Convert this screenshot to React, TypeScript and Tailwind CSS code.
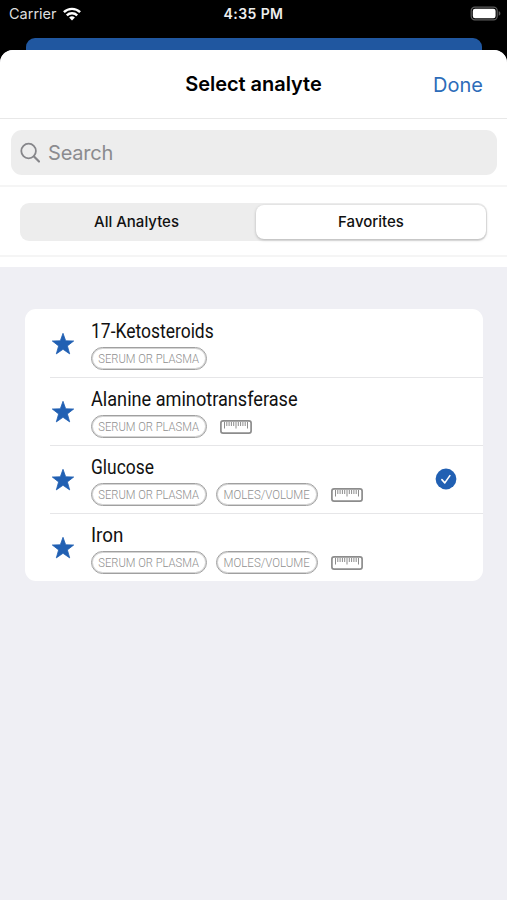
import { useState } from "react";
import clsx from "clsx";

type Analyte = {
  name: string;
  // Horizontal squeeze that gives the name its condensed look
  nameClass: string;
  molar?: boolean;
  ruler?: boolean;
};

const ANALYTES: Analyte[] = [
  { name: "17-Ketosteroids", nameClass: "scale-x-[0.873]" },
  { name: "Alanine aminotransferase", nameClass: "scale-x-[0.907]", ruler: true },
  { name: "Glucose", nameClass: "scale-x-[0.87]", molar: true, ruler: true },
  { name: "Iron", nameClass: "scale-x-[0.94]", molar: true, ruler: true },
];

const TABS = ["All Analytes", "Favorites"];

function WifiIcon() {
  return (
    <svg width="18" height="14" viewBox="0 0 18 14" fill="none" stroke="white" strokeWidth="2.4">
      <path d="M0.9 5.2a11.6 11.6 0 0 1 16.2 0" />
      <path d="M3.8 8.4a7.5 7.5 0 0 1 10.4 0" />
      <path d="M9 13.6 6.1 10.6a4.2 4.2 0 0 1 5.8 0z" fill="white" stroke="none" />
    </svg>
  );
}

function BatteryIcon() {
  return (
    <svg width="31" height="15" viewBox="0 0 31 15" fill="none">
      <rect x="1.2" y="1.2" width="26" height="12.6" rx="3.6" stroke="#5c5c5c" strokeWidth="1.2" />
      <rect x="2.8" y="2.8" width="22.8" height="9.4" rx="2.2" fill="white" />
      <path d="M28.7 5.3c1.2.4 1.7 1.2 1.7 2.2s-.5 1.8-1.7 2.2z" fill="#5c5c5c" />
    </svg>
  );
}

function SearchIcon() {
  return (
    <svg width="22" height="22" viewBox="0 0 22 22" fill="none" stroke="#86868a" strokeLinecap="round">
      <circle cx="8.6" cy="9" r="7.3" strokeWidth="1.8" />
      <path d="M14 14.4 19 19.6" strokeWidth="2.1" />
    </svg>
  );
}

function StarIcon() {
  return (
    <svg width="24" height="24" viewBox="0 0 24 24" fill="#2160b3">
      <path
        d="M12 1.3 14.7 8.8 22.7 9 16.4 13.9 18.7 21.9 12 17.3 5.3 21.9 7.6 13.9 1.3 9 9.3 8.8z"
        stroke="#2160b3"
        strokeWidth="0.8"
        strokeLinejoin="round"
      />
    </svg>
  );
}

function RulerIcon() {
  return (
    <svg width="32" height="14" viewBox="0 0 32 14" fill="none" stroke="#8c8c8c">
      <rect x="0.9" y="0.9" width="30.2" height="12.2" rx="2.2" strokeWidth="1.7" />
      <path
        d="M4.5 2v6.5M6.8 2v4M9.1 2v4M11.4 2v4M13.7 2v4M16 2v6.5M18.3 2v4M20.6 2v4M22.9 2v4M25.2 2v4M27.5 2v6.5"
        strokeWidth="1"
      />
    </svg>
  );
}

function CheckBadge() {
  return (
    <svg width="22" height="22" viewBox="0 0 22 22" fill="none">
      <circle cx="11" cy="11" r="10.4" fill="#2160b3" />
      <path d="M6.9 11.6 9.8 14.9 14.9 7.6" stroke="white" strokeWidth="1.6" strokeLinecap="round" strokeLinejoin="round" />
    </svg>
  );
}

function Pill({ children, className, textClass }: { children: string; className: string; textClass: string }) {
  return (
    <span
      className={clsx(
        "flex h-[23px] items-center justify-center rounded-full border border-[#a0a0a0] text-[13.5px] font-light whitespace-nowrap text-[#8f8f8f] shadow-[inset_0_0_0_1px_#d4d4d4]",
        className,
      )}
    >
      <span className={textClass}>{children}</span>
    </span>
  );
}

function AnalyteRow({ analyte, selected, onSelect }: { analyte: Analyte; selected: boolean; onSelect: () => void }) {
  return (
    <li className="group flex h-[68px] cursor-pointer pl-[25px] font-[Roboto,sans-serif]" onClick={onSelect}>
      <div className="flex flex-1 border-t border-[#e6e6e8] group-first:border-transparent">
        <div className="w-[41px] shrink-0 pt-[22px] pl-px">
          <StarIcon />
        </div>
        <div className="min-w-0 flex-1 pt-[7px]">
          <div className="h-[30px] text-[20px] leading-7 whitespace-nowrap text-[#111]">
            <span className={clsx("inline-block origin-left", analyte.nameClass)}>{analyte.name}</span>
          </div>
          <div className="flex items-center">
            <Pill className="w-[116px]" textClass="scale-x-[0.83]">
              SERUM OR PLASMA
            </Pill>
            {analyte.molar && (
              <Pill className="ml-[9px] w-[102px]" textClass="scale-x-[0.85]">
                MOLES/VOLUME
              </Pill>
            )}
            {analyte.ruler && (
              <span className="ml-[13px]">
                <RulerIcon />
              </span>
            )}
          </div>
        </div>
        {selected && (
          <div className="mr-[26px] pt-[22px]">
            <CheckBadge />
          </div>
        )}
      </div>
    </li>
  );
}

export default function App() {
  const [tab, setTab] = useState("Favorites");
  const [selected, setSelected] = useState("Glucose");

  return (
    <div className="flex h-[900px] w-[507px] flex-col overflow-hidden bg-black font-[Inter,sans-serif]">
      {/* Status bar */}
      <div className="grid h-[38px] shrink-0 grid-cols-3 items-start pt-1 text-white">
        <div className="flex items-center gap-1.5 pl-[9px] text-[14.5px] leading-5 text-[#dedede]">
          Carrier
          <WifiIcon />
        </div>
        <div className="text-center text-[14px] leading-5 font-semibold tracking-[0.4px] text-[#eee]">4:35 PM</div>
        <div className="flex justify-end pt-0.5 pr-[6px]">
          <BatteryIcon />
        </div>
      </div>

      {/* Top edge of the screen behind the sheet */}
      <div className="mr-[25px] ml-[26px] h-3 shrink-0 rounded-t-[9px] bg-[#2057a0]" />

      <div className="flex min-h-0 flex-1 flex-col overflow-hidden rounded-t-[13px] bg-[#efeff4]">
        <header className="grid h-[69px] shrink-0 grid-cols-[1fr_auto_1fr] items-center border-b border-[#e8e8e8] bg-white">
          <span />
          <h1 className="text-[20px] font-semibold tracking-[-0.05px] text-black">Select analyte</h1>
          <button className="justify-self-end pt-px pr-[24px] text-[20px] text-[#2d6cb9]">Done</button>
        </header>

        <div className="h-[68px] shrink-0 border-b-2 border-[#f5f5f5] bg-white px-[11px] pt-[11px]">
          <div className="-mr-px flex h-[45px] items-center gap-[6px] rounded-[11px] bg-[#ededed] pl-[9px]">
            <SearchIcon />
            <span className="pt-px text-[20px] tracking-[-0.2px] text-[#8b8b8f]">Search</span>
          </div>
        </div>

        <div className="h-[70px] shrink-0 border-b-2 border-[#f5f5f5] bg-white px-5 pt-4">
          <div className="grid h-[38px] grid-cols-2 rounded-[9px] bg-[#ededed] py-[2px] pr-px">
            {TABS.map((label) => (
              <button
                key={label}
                onClick={() => setTab(label)}
                className={clsx(
                  "rounded-[8px] pt-px text-[15px] font-medium text-[#111]",
                  tab === label && "ml-[3px] bg-white shadow-[0_1px_3px_rgba(0,0,0,0.25)]",
                )}
              >
                {label}
              </button>
            ))}
          </div>
        </div>
        <div className="h-[10px] shrink-0 bg-white" />

        <ul className="mt-[42px] mr-[24px] ml-[25px] overflow-hidden rounded-[11px] bg-white">
          {ANALYTES.map((analyte) => (
            <AnalyteRow
              key={analyte.name}
              analyte={analyte}
              selected={selected === analyte.name}
              onSelect={() => setSelected(analyte.name)}
            />
          ))}
        </ul>
      </div>
    </div>
  );
}
